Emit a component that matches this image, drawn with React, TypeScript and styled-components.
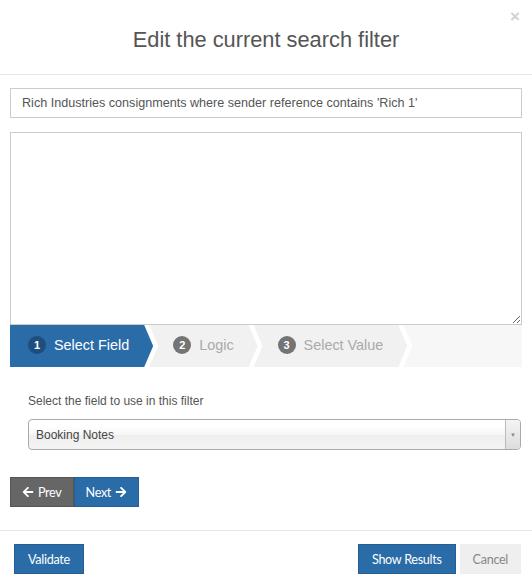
import React from "react";
import styled, { createGlobalStyle } from "styled-components";
import { FaArrowLeft, FaArrowRight } from "react-icons/fa";

const Global = createGlobalStyle`
  html, body { margin: 0; padding: 0; background: #fff; }
  body { font-family: "Liberation Sans", Arial, sans-serif; color: #555; }
  * { box-sizing: border-box; }
`;

const Modal = styled.div`
  width: 532px;
  height: 586px;
  background: #fff;
  display: flex;
  flex-direction: column;
`;

const Header = styled.div`
  position: relative;
  height: 75px;
  border-bottom: 1px solid #e5e5e5;
  display: flex;
  align-items: center;
  justify-content: center;
  padding-top: 6px;
`;

const Title = styled.h4`
  margin: 0;
  font-family: "Liberation Sans", Arial, sans-serif;
  font-weight: normal;
  font-size: 21.8px;
  color: #555;
`;

const Close = styled.button`
  position: absolute;
  top: 7px;
  right: 12px;
  border: 0;
  background: none;
  padding: 0;
  font-family: "Liberation Sans", Arial, sans-serif;
  font-size: 17px;
  font-weight: bold;
  line-height: 20px;
  color: #d2d2d2;
  cursor: pointer;
`;

const Body = styled.div`
  padding: 13px 10px 23px 10px;
  border-bottom: 1px solid #e5e5e5;
`;

const TextInput = styled.input`
  display: block;
  width: 100%;
  height: 30px;
  border: 1px solid #ccc;
  padding: 0 11px;
  font-family: "Liberation Sans", Arial, sans-serif;
  font-size: 12.6px;
  color: #555;
  outline: none;
  margin-bottom: 14px;
`;

const TextArea = styled.textarea`
  display: block;
  width: 100%;
  height: 193px;
  border: 1px solid #ccc;
  resize: vertical;
  margin: 0;
  outline: none;
`;

const Wizard = styled.div`
  display: flex;
  height: 42px;
  background: #fff;
`;

const Step = styled.div<{ $first?: boolean; $active?: boolean }>`
  flex: none;
  display: flex;
  align-items: center;
  gap: 8px;
  height: 42px;
  padding-bottom: 2px;
  margin-left: ${(p) => (p.$first ? "0" : "-4px")};
  padding-right: 24px;
  padding-left: ${(p) => (p.$first ? "18px" : "24px")};
  background: ${(p) => (p.$active ? "#2a6ca8" : "#f1f1f1")};
  color: ${(p) => (p.$active ? "#fff" : "#aaa")};
  font-family: "Liberation Sans", Arial, sans-serif;
  font-size: 14.4px;
  clip-path: ${(p) =>
    p.$first
      ? "polygon(0 0, calc(100% - 9px) 0, 100% 50%, calc(100% - 9px) 100%, 0 100%)"
      : "polygon(0 0, calc(100% - 9px) 0, 100% 50%, calc(100% - 9px) 100%, 0 100%, 9px 50%)"};
`;

const Filler = styled.div`
  flex: 1;
  margin-left: -4px;
  background: #f7f7f7;
  clip-path: polygon(0 0, 100% 0, 100% 100%, 0 100%, 9px 50%);
`;

const Num = styled.span<{ $active?: boolean }>`
  width: 18px;
  height: 18px;
  border-radius: 50%;
  background: ${(p) => (p.$active ? "#1d4e7d" : "#747474")};
  color: #fff;
  font-size: 11px;
  font-weight: bold;
  display: flex;
  align-items: center;
  justify-content: center;
`;

const FieldArea = styled.div`
  padding: 27px 1px 0 18px;
`;

const Label = styled.div`
  font-family: "Liberation Sans", Arial, sans-serif;
  font-size: 12px;
  color: #555;
  line-height: 14px;
  margin-bottom: 11px;
`;

const Select = styled.div`
  height: 31px;
  display: flex;
  border: 1px solid #aaa;
  border-radius: 4px;
  background: linear-gradient(#fff 20%, #f6f6f6 50%, #eee 52%, #f4f4f4 100%);
  overflow: hidden;
`;

const SelectText = styled.div`
  flex: 1;
  display: flex;
  align-items: center;
  padding-left: 7px;
  font-family: "Liberation Sans", Arial, sans-serif;
  font-size: 12px;
  color: #444;
`;

const SelectArrow = styled.div`
  width: 15px;
  border-left: 1px solid #bbb;
  background: linear-gradient(#f4f4f4, #ddd);
  display: flex;
  align-items: center;
  justify-content: center;
  color: #888;
  font-size: 6px;
`;

const NavRow = styled.div`
  display: flex;
  margin-top: 27px;
`;

const Btn = styled.button<{ $variant: "blue" | "grey" | "light" }>`
  height: 30px;
  padding: 0 ${(p) => (p.$variant === "light" ? "12px" : "13px")};
  display: inline-flex;
  align-items: center;
  font-family: Lato, "Open Sans", sans-serif;
  font-size: 12.6px;
  letter-spacing: -0.3px;
  cursor: pointer;
  border: 1px solid
    ${(p) => (p.$variant === "blue" ? "#245e93" : p.$variant === "grey" ? "#555" : "#eee")};
  background: ${(p) => (p.$variant === "blue" ? "#2a6ca8" : p.$variant === "grey" ? "#666" : "#efefef")};
  color: ${(p) => (p.$variant === "light" ? "#888" : "#fff")};
  border-radius: 0;
`;

const NavBtn = styled(Btn)`
  padding: 0 11px;
  gap: 1px;
`;

const Footer = styled.div`
  display: flex;
  align-items: center;
  padding: 13px 11px 0 14px;
  gap: 4px;
`;

const Spacer = styled.div`
  flex: 1;
`;

export default function App() {
  return (
    <>
      <Global />
      <Modal>
        <Header>
          <Title>Edit the current search filter</Title>
          <Close aria-label="Close">×</Close>
        </Header>
        <Body>
          <TextInput defaultValue="Rich Industries consignments where sender reference contains 'Rich 1'" />
          <TextArea />
          <Wizard>
            <Step $first $active>
              <Num $active>1</Num>Select Field
            </Step>
            <Step>
              <Num>2</Num>Logic
            </Step>
            <Step>
              <Num>3</Num>Select Value
            </Step>
            <Filler />
          </Wizard>
          <FieldArea>
            <Label>Select the field to use in this filter</Label>
            <Select>
              <SelectText>Booking Notes</SelectText>
              <SelectArrow>▼</SelectArrow>
            </Select>
          </FieldArea>
          <NavRow>
            <NavBtn $variant="grey">
              <FaArrowLeft size={12} />&nbsp;Prev
            </NavBtn>
            <NavBtn $variant="blue">
              Next&nbsp;<FaArrowRight size={12} />
            </NavBtn>
          </NavRow>
        </Body>
        <Footer>
          <Btn $variant="blue">Validate</Btn>
          <Spacer />
          <Btn $variant="blue">Show Results</Btn>
          <Btn $variant="light">Cancel</Btn>
        </Footer>
      </Modal>
    </>
  );
}
